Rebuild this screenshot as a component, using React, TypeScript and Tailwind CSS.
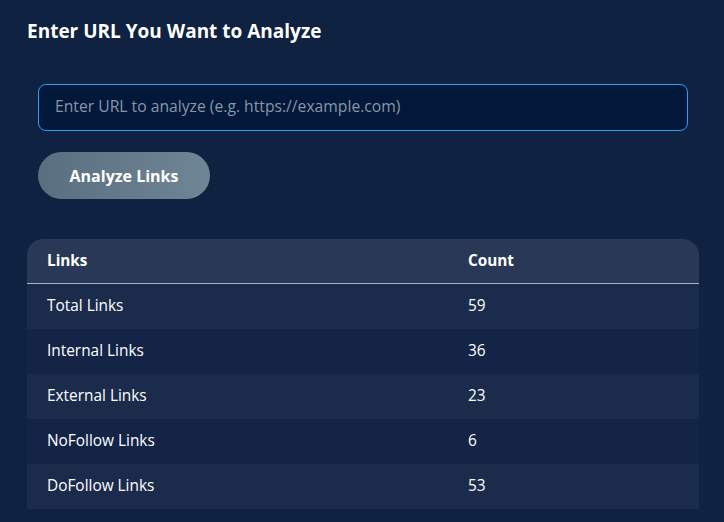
import React from "react";

const rows = [
  ["Total Links", "59"],
  ["Internal Links", "36"],
  ["External Links", "23"],
  ["NoFollow Links", "6"],
  ["DoFollow Links", "53"],
];

export default function App() {
  return (
    <div className="w-[724px] h-[522px] overflow-hidden bg-[#0f2241] text-white px-[27px] pt-[19px]" style={{ fontFamily: "'Open Sans', sans-serif" }}>
      <h1 className="text-[19px] font-bold leading-[25px]">Enter URL You Want to Analyze</h1>
      <div className="pl-[11px] pt-[40px]">
        <input
          type="text"
          placeholder="Enter URL to analyze (e.g. https://example.com)"
          className="block w-[650px] h-[47px] rounded-[8px] border border-[#2a9df4] bg-[#01183a] px-[16px] pb-[3px] text-[15.7px] text-white placeholder:text-[#8a96a8] outline-none"
          style={{ fontFamily: "'Open Sans', sans-serif" }}
        />
        <button className="block mt-[21px] h-[47px] w-[172px] rounded-full bg-gradient-to-r from-[#5a6e7f] to-[#6f8696] text-[16px] font-bold text-white">
          Analyze Links
        </button>
      </div>
      <div className="mt-[40px] w-[672px] rounded-t-[16px] overflow-hidden">
        <div className="flex h-[45px] items-center bg-[#283856] border-b border-[#a9b4c6] text-[15.3px] font-bold pb-[2px]">
          <div className="w-[421px] pl-[20px]">Links</div>
          <div className="pl-[20px]">Count</div>
        </div>
        {rows.map(([label, count], i) => (
          <div
            key={label}
            className={`flex h-[45px] items-center text-[15.4px] pb-[2px] ${i % 2 === 0 ? "bg-[#1b2b4b]" : "bg-[#142447]"}`}
          >
            <div className="w-[421px] pl-[20px]">{label}</div>
            <div className="pl-[20px]">{count}</div>
          </div>
        ))}
      </div>
    </div>
  );
}
